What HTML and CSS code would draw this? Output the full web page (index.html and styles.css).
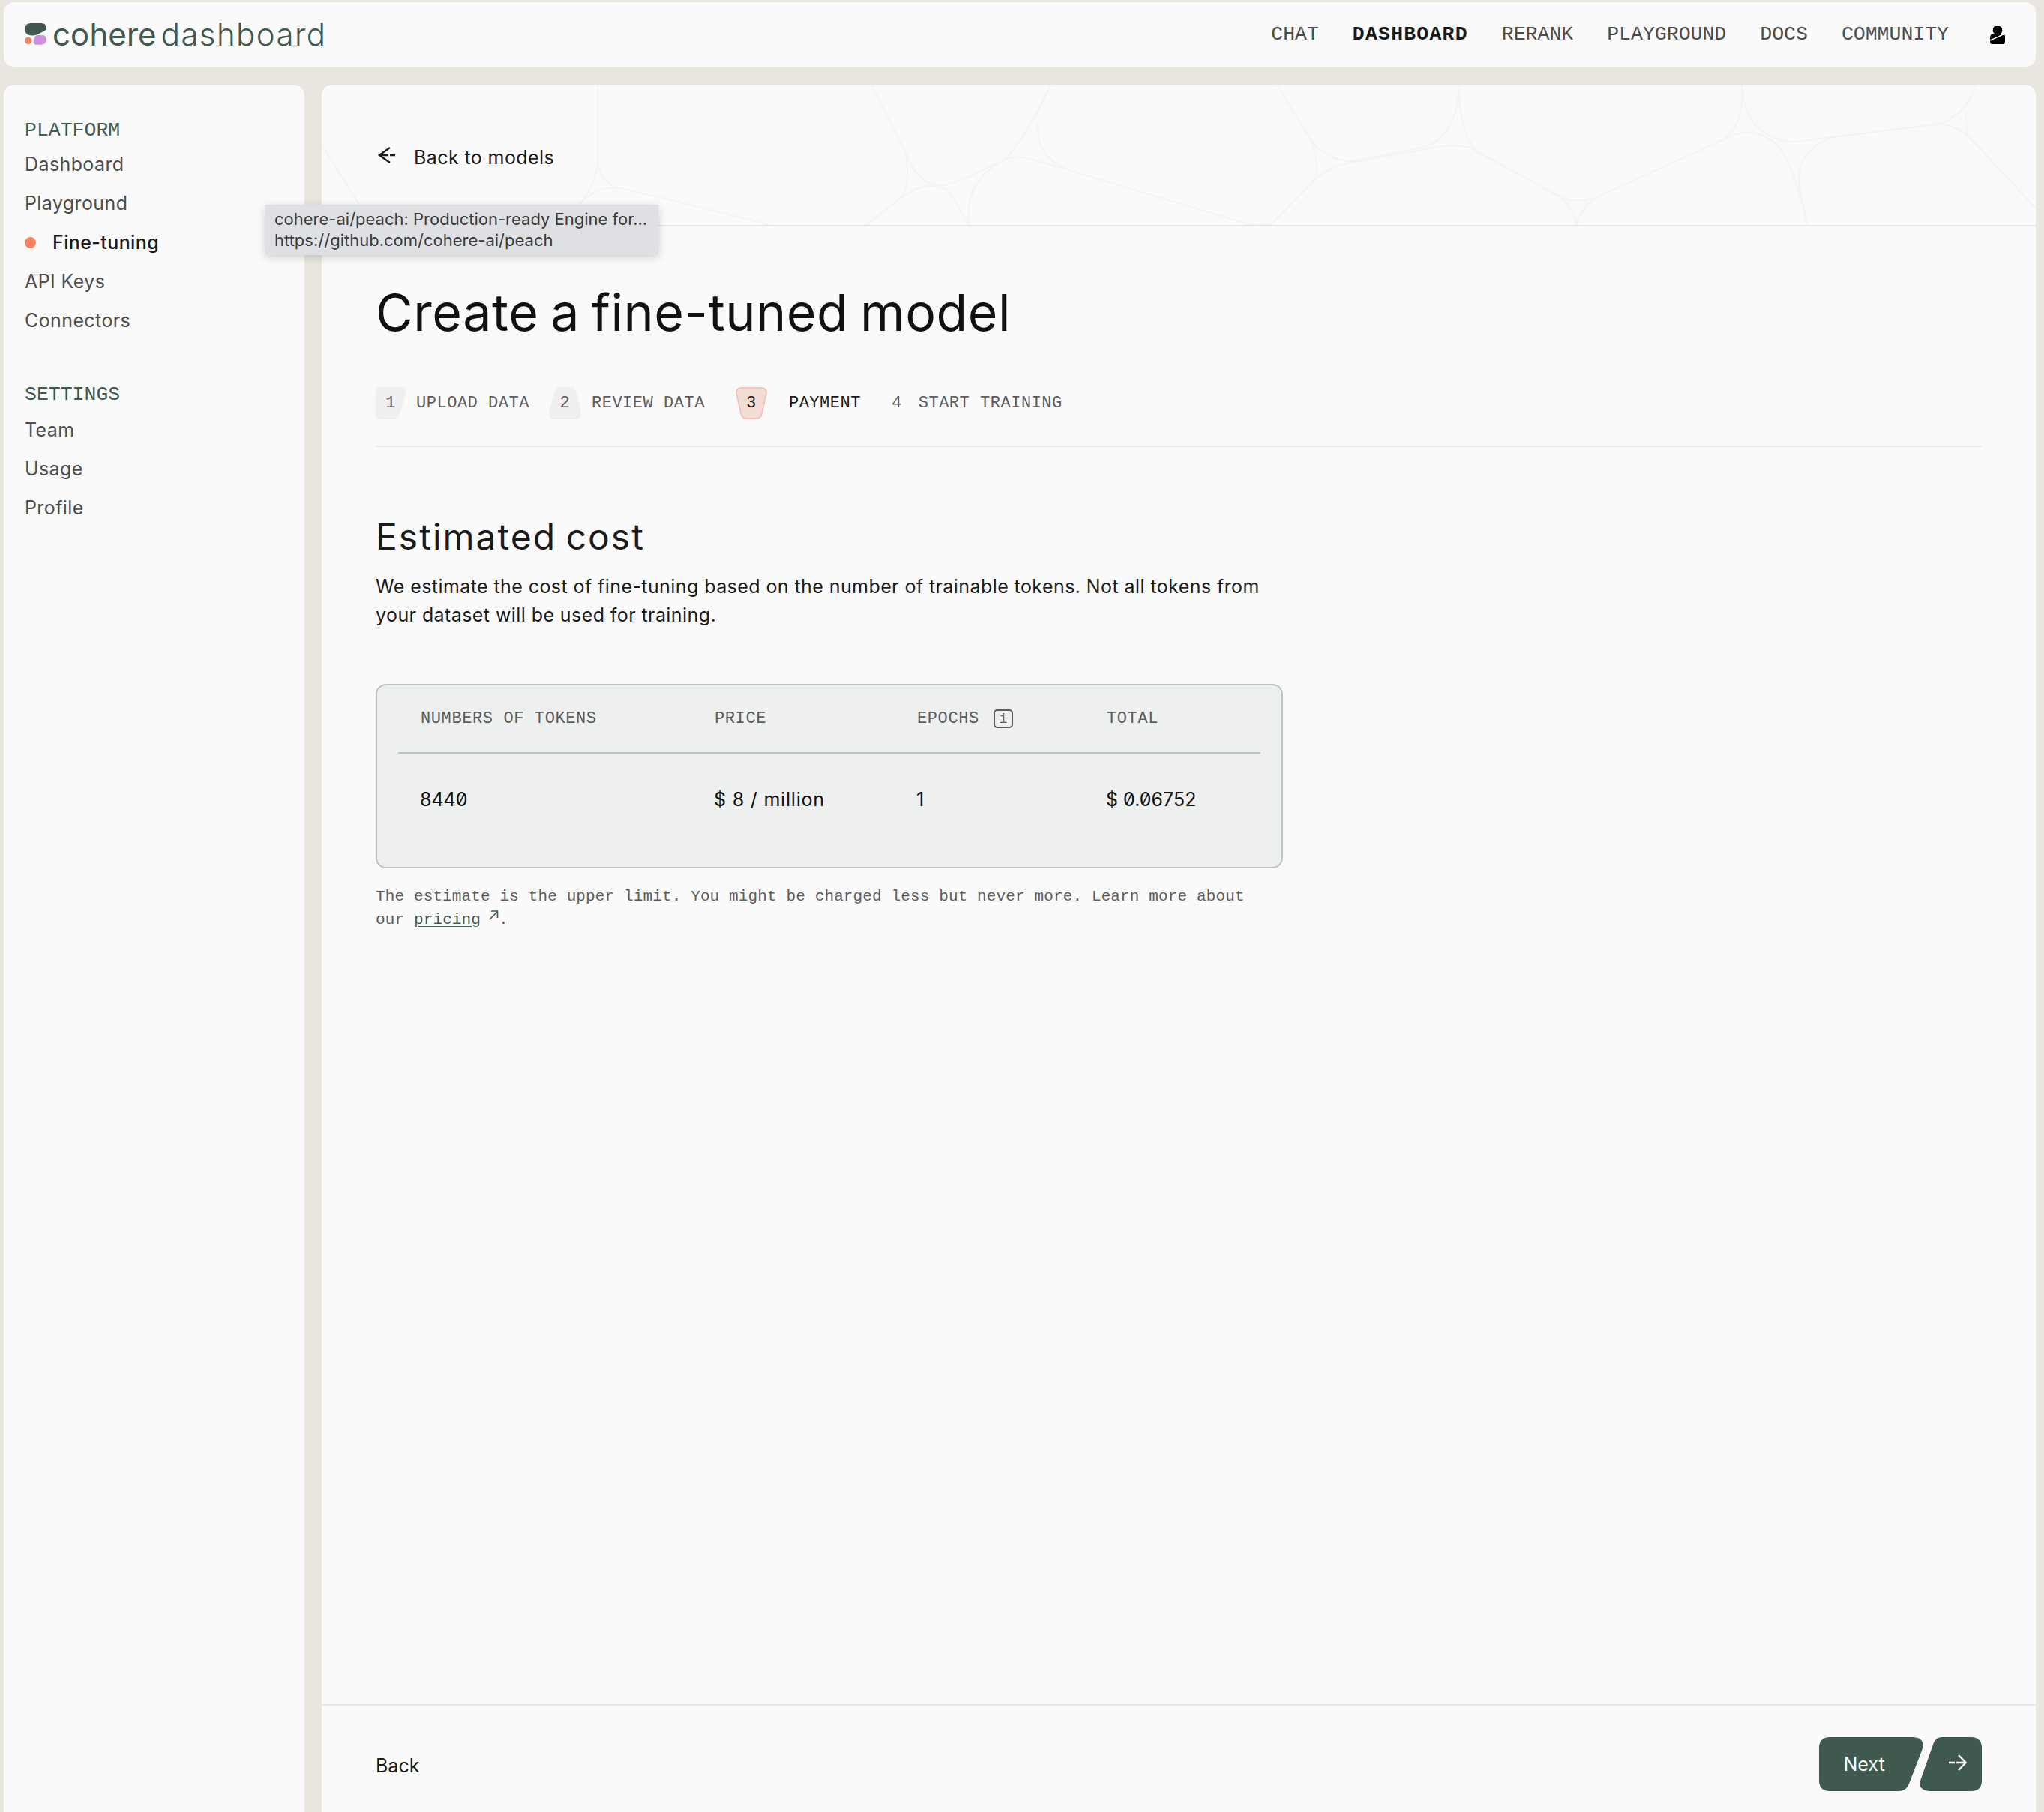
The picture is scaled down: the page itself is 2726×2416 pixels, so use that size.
FILE: index.html
```html
<!DOCTYPE html>
<html lang="en">
<head>
    <meta charset="UTF-8">
    <title>Create a fine-tuned model</title>
    <link rel="stylesheet" href="styles.css">
</head>
<body>
    <header class="topbar">
        <a class="brand">
            <svg class="brand-mark" width="30" height="30" viewBox="0 0 30 30">
                <path fill="#40594f" d="M8 1H22C27 1 29 4 29 7C29 11 25 12 21 14C17 16.500 14 17.500 10 17.500C4 17.500 0 14 0 9C0 4 3 1 8 1Z"/>
                <circle fill="#f4845f" cx="4.700" cy="24.300" r="4.800"/>
                <path fill="#ce8fe0" d="M17 17H24C27 17 29 20 29 23C29 27 26 29.700 22 29.700H15C13 29.700 12 28 12 26C12 21 14 17 17 17Z"/>
            </svg>
            <span class="brand-name">cohere</span>
            <span class="brand-sub">dashboard</span>
        </a>
        <nav class="topnav">
            <a>CHAT</a>
            <a class="active">DASHBOARD</a>
            <a>RERANK</a>
            <a>PLAYGROUND</a>
            <a>DOCS</a>
            <a>COMMUNITY</a>
            <svg class="user-icon" width="20" height="26" viewBox="0 0 20 26">
                <circle cx="10" cy="7.300" r="6.300" fill="#000"/>
                <path fill="#000" d="M4 12H17C19 12 20 14 20 16V23C20 25 19 26 17 26H3C1 26 0 25 0 23V18C0 14 2 12 4 12Z"/>
                <path stroke="#fafafa" stroke-width="1.500" d="M0 21L20 12"/>
            </svg>
        </nav>
    </header>

    <div class="layout">
        <aside class="sidebar">
            <h4 class="side-title">PLATFORM</h4>
            <a class="side-link">Dashboard</a>
            <a class="side-link">Playground</a>
            <a class="side-link current"><span class="dot"></span>Fine-tuning</a>
            <a class="side-link">API Keys</a>
            <a class="side-link">Connectors</a>
            <h4 class="side-title second">SETTINGS</h4>
            <a class="side-link">Team</a>
            <a class="side-link">Usage</a>
            <a class="side-link">Profile</a>
        </aside>

        <main class="main">
            <div class="banner">
                <!-- faint background lines -->
                <svg class="banner-lines" width="2286" height="189" viewBox="0 0 2286 189">
                    <g fill="none" stroke="#f3f3f1" stroke-width="2">
                        <path d="M368 0V100Q370 127 393 137L471 155"/>
                        <path d="M343 160Q363 137 393 137"/>
                        <path d="M368 100Q367 133 343 160"/>
                        <path d="M0 80L50 160L57 189"/>
                    </g>
                    <g transform="translate(471,-13) scale(1.1646,0.3333)" fill="none" stroke="#f3f3f1" stroke-width="2">
                        <path vector-effect="non-scaling-stroke" d="M225 40L265 320Q280 445 305 442Q320 440 380 335Q410 200 430 40"/>
                        <path vector-effect="non-scaling-stroke" d="M415 200Q415 330 450 380L650 590Q665 610 685 590L730 430Q745 370 775 350L870 290Q890 275 910 290L920 310L1015 490Q1035 515 1055 490L1200 260Q1230 200 1255 260Q1280 320 1297 605"/>
                        <path vector-effect="non-scaling-stroke" d="M690 40L730 270Q750 345 775 345L855 290Q895 260 898 40Q898 250 920 310"/>
                        <path vector-effect="non-scaling-stroke" d="M1222 40Q1225 250 1280 268L1450 195Q1480 150 1490 40"/>
                        <path vector-effect="non-scaling-stroke" d="M1222 40Q1225 200 1200 260"/>
                        <path vector-effect="non-scaling-stroke" d="M217 605L260 490Q290 410 315 470L337 605Q330 420 380 335Q395 320 410 340L450 380"/>
                        <path vector-effect="non-scaling-stroke" d="M265 320Q270 470 255 500"/>
                        <path vector-effect="non-scaling-stroke" d="M730 270Q740 380 730 430"/>
                        <path vector-effect="non-scaling-stroke" d="M1015 490Q1030 540 1033 605Q1035 540 1055 490"/>
                        <path vector-effect="non-scaling-stroke" d="M1297 605L1287 430Q1285 300 1325 250L1440 200Q1460 190 1480 240L1560 540"/>
                        <path vector-effect="non-scaling-stroke" d="M1478 150L1480 240"/>
                        <path vector-effect="non-scaling-stroke" d="M0 505L115 605"/>
                    </g>
                </svg>
                <a class="back-link">
                    <svg class="back-arrow" width="24" height="22" viewBox="0 0 24 22" fill="none" stroke="#1a1a1a" stroke-width="2.400">
                        <path d="M17 1L3 11l14 10"/>
                        <path d="M3 11h12M17 11h7"/>
                    </svg>
                    <span>Back to models</span>
                </a>
            </div>

            <div class="content">
                <h1 class="page-title">Create a fine-tuned model</h1>

                <div class="steps">
                    <span class="badge badge-a">1</span><span class="step-label">UPLOAD DATA</span>
                    <span class="badge badge-b">2</span><span class="step-label">REVIEW DATA</span>
                    <span class="badge badge-c">
                        <svg class="badge-shape" width="42" height="43" viewBox="0 0 42 43">
                            <path fill="#f3dcd4" stroke="#f5bcaa" stroke-width="1.500" d="M7 1H35C40 1 41 4 41 8L35 35C34 40 31 42 27 42H15C11 42 8 40 7 35L1 8C1 4 2 1 7 1Z"/>
                        </svg>
                        <span class="badge-num">3</span>
                    </span><span class="step-label on">PAYMENT</span>
                    <span class="step-num">4</span><span class="step-label">START TRAINING</span>
                </div>

                <section class="cost">
                    <h2>Estimated cost</h2>
                    <p class="intro">We estimate the cost of fine-tuning based on the number of trainable tokens. Not all tokens from your dataset will be used for training.</p>

                    <div class="cost-table">
                        <div class="cost-row head">
                            <span>NUMBERS OF TOKENS</span>
                            <span>PRICE</span>
                            <span class="epochs">EPOCHS <i class="info">i</i></span>
                            <span>TOTAL</span>
                        </div>
                        <div class="cost-row body">
                            <span>8440</span>
                            <span class="price">$ 8 / million</span>
                            <span>1</span>
                            <span>$ 0.06752</span>
                        </div>
                    </div>

                    <p class="note">The estimate is the upper limit. You might be charged less but never more. Learn more about our <a class="pricing">pricing</a><svg class="ext" width="14" height="14" viewBox="0 0 14 14" fill="none" stroke="#40594f" stroke-width="1.600"><path d="M2 13L12 3M4 2h8.500v9"/></svg>.</p>
                </section>
            </div>

            <footer class="actions">
                <a class="back">Back</a>
                <div class="next">
                    <button class="next-label">Next</button>
                    <button class="next-arrow">
                        <svg width="24" height="22" viewBox="0 0 24 22" fill="none" stroke="#fafafa" stroke-width="2.400">
                            <path d="M0 11h8M10 11h12"/>
                            <path d="M13 1l9.500 10-9.500 10"/>
                        </svg>
                    </button>
                </div>
            </footer>
        </main>
    </div>

    <!-- browser link preview -->
    <div class="link-tip">
        <div>cohere-ai/peach: Production-ready Engine for...</div>
        <div>https://github.com/cohere-ai/peach</div>
    </div>
</body>
</html>
```

FILE: styles.css
```css
html, body {
    height: 100%;
}
body {
    margin: 0;
    height: 2416px;
    overflow: hidden;
    box-sizing: border-box;
    padding: 3px 11px 0 5px;
    background-color: #e8e6df;
    color: #1a1a1a;
    font-family: Inter, "Open Sans", sans-serif;
    display: flex;
    flex-direction: column;
    gap: 24px;
}
a {
    color: inherit;
    text-decoration: none;
}

/* top bar */
.topbar {
    height: 86px;
    flex: none;
    background-color: #fafafa;
    border-radius: 14px;
    display: flex;
    align-items: center;
    justify-content: space-between;
    padding: 0 41px 0 28px;
}
.brand {
    display: flex;
    align-items: center;
    color: #40594f;
    font-size: 42px;
    font-weight: 300;
    padding-bottom: 2px;
}
.brand-mark {
    margin-right: 7px;
}
.brand-name {
    margin-right: 6px;
    font-weight: 400;
    letter-spacing: 0.100px;
}
.brand-sub {
    letter-spacing: 1.400px;
}
.topnav {
    display: flex;
    align-items: center;
    gap: 45px;
    font-family: "Liberation Mono", monospace;
    font-size: 26.500px;
    color: #4d4d4d;
}
.topnav .active {
    color: #1a1a1a;
    font-weight: 700;
    letter-spacing: 1.200px;
}
.user-icon {
    margin-left: 10px;
}

/* sidebar + main */
.layout {
    flex: 1;
    min-height: 0;
    display: flex;
    gap: 23px;
}
.sidebar {
    width: 401px;
    flex: none;
    box-sizing: border-box;
    background-color: #fafafa;
    border-radius: 14px 14px 0 0;
    padding: 44px 28px;
    display: flex;
    flex-direction: column;
}
.side-title {
    margin: 0 0 2px;
    height: 34px;
    line-height: 34px;
    font-family: "Liberation Mono", monospace;
    font-size: 26.500px;
    font-weight: 400;
    color: #40594f;
}
.side-title.second {
    margin: 56px 0 4px;
}
.side-link {
    height: 52px;
    line-height: 52px;
    font-size: 25px;
    letter-spacing: 0.400px;
    color: #4d4d4d;
    display: flex;
    align-items: center;
}
.side-link.current {
    color: #1a1a1a;
    font-weight: 500;
}
.dot {
    width: 15px;
    height: 15px;
    border-radius: 50%;
    background-color: #f4845f;
    margin-right: 22px;
}

.main {
    flex: 1;
    min-width: 0;
    background-color: #fafafa;
    border-radius: 14px 14px 0 0;
    display: flex;
    flex-direction: column;
}
.banner {
    position: relative;
    overflow: hidden;
    height: 189px;
    flex: none;
    box-sizing: border-box;
    border-bottom: 2px solid #e6e6e6;
    border-radius: 14px 14px 0 0;
    padding: 82px 0 0 74px;
}
.banner-lines {
    position: absolute;
    top: 0;
    left: 0;
}
.back-link {
    position: relative;
    display: flex;
    align-items: center;
    height: 30px;
    gap: 25px;
    font-size: 25px;
    letter-spacing: 0.400px;
}
.back-arrow {
    margin-top: -7px;
}
.content {
    flex: 1;
    min-height: 0;
    padding: 0 72px;
}
.page-title {
    margin: 0;
    padding-top: 66px;
    height: 96px;
    line-height: 96px;
    font-size: 68px;
    font-weight: 400;
    letter-spacing: 0.600px;
    word-spacing: -4px;
    color: #111;
}

/* steps */
.steps {
    display: flex;
    align-items: center;
    margin-top: 52px;
    height: 43px;
    padding-bottom: 35px;
    border-bottom: 2px solid #e9e9e9;
    font-family: "Liberation Mono", monospace;
    font-size: 22px;
    letter-spacing: 0.520px;
    color: #5c5c5c;
}
.badge {
    height: 43px;
    display: flex;
    align-items: center;
    justify-content: center;
    background-color: #efefef;
}
.badge-a {
    width: 40px;
    clip-path: path("M8 0H33C39 0 41 3 40 8L32 36C30 41 28 43 23 43H8C2 43 0 41 0 35V8C0 2 2 0 8 0Z");
    margin-right: 14px;
}
.badge-b {
    width: 43px;
    clip-path: path("M14 0H29C33 0 35 2 36 6L43 33C44 40 40 43 35 43H8C2 43 -1 40 0 33L8 6C9 2 11 0 14 0Z");
    margin: 0 14px 0 26px;
}
.badge-c {
    position: relative;
    width: 42px;
    margin: 0 29px 0 41px;
    background: none;
    color: #1a1a1a;
}
.badge-shape {
    position: absolute;
    top: 0;
    left: 0;
}
.badge-num {
    position: relative;
}
.step-num {
    margin: 0 22px 0 41px;
}
.step-label.on {
    color: #1a1a1a;
}

/* estimated cost */
.cost {
    width: 1210px;
}
.cost h2 {
    margin: 89px 0 0;
    height: 62px;
    line-height: 62px;
    font-size: 48px;
    font-weight: 400;
    letter-spacing: 2px;
    word-spacing: -3px;
    color: #1a1a1a;
}
.intro {
    margin: 16px 0 0;
    font-size: 25px;
    letter-spacing: 0.420px;
    line-height: 38px;
}
.cost-table {
    margin-top: 73px;
    box-sizing: border-box;
    height: 246px;
    padding: 0 28px;
    background-color: #eef0ef;
    border: 2px solid #bcc3c0;
    border-radius: 14px;
}
.cost-row {
    display: grid;
    grid-template-columns: 392px 270px 253px 1fr;
    align-items: center;
    padding-left: 30px;
}
.cost-row.head {
    height: 89px;
    border-bottom: 2px solid #bcc3c0;
    font-family: "Liberation Mono", monospace;
    font-size: 22px;
    letter-spacing: 0.600px;
    color: #5c5c5c;
}
.cost-row.body {
    height: 121px;
    padding-left: 29px;
    font-size: 25px;
    font-feature-settings: "zero";
    color: #111;
}
.price {
    letter-spacing: 0.800px;
}
.epochs {
    display: flex;
    align-items: center;
    gap: 19px;
}
.info {
    width: 26px;
    height: 25px;
    box-sizing: border-box;
    border: 2px solid #5c5c5c;
    border-radius: 5px;
    display: flex;
    align-items: center;
    justify-content: center;
    font-style: normal;
    font-size: 18px;
    letter-spacing: 0;
}
.note {
    margin: 22px 0 0;
    max-width: 1175px;
    font-family: "Liberation Mono", monospace;
    font-size: 21px;
    letter-spacing: 0.130px;
    line-height: 31px;
    color: #5c5c5c;
}
.pricing {
    color: #40594f;
    text-decoration: underline;
}
.ext {
    margin: 0 0 5px 10px;
}

/* bottom actions */
.actions {
    height: 144px;
    flex: none;
    box-sizing: border-box;
    border-top: 2px solid #e6e6e6;
    padding: 42px 72px 0;
    display: flex;
    justify-content: space-between;
    align-items: flex-start;
}
.back {
    margin-top: 23px;
    font-size: 25px;
}
.next {
    display: flex;
    height: 72px;
}
button {
    border: none;
    background-color: #40594f;
    color: #fafafa;
    padding: 0;
    font-family: inherit;
    font-size: 25px;
    height: 72px;
}
.next-label {
    width: 140px;
    clip-path: path("M14 0H124C137 0 141 7 137 18L120 62C117 69 113 72 106 72H14C5 72 0 67 0 58V14C0 5 5 0 14 0Z");
    padding-right: 20px;
    margin-right: -6px;
}
.next-arrow {
    width: 83px;
    clip-path: path("M30 0H69C78 0 83 5 83 14V58C83 67 78 72 69 72H14C4 72 -2 66 1 58L18 10C20 3 24 0 30 0Z");
    padding-left: 18px;
}

/* link preview tooltip */
.link-tip {
    position: absolute;
    top: 273px;
    left: 354px;
    width: 524px;
    height: 67px;
    box-sizing: border-box;
    padding: 5px 12px;
    background-color: #dfe0e4;
    border-radius: 2px;
    box-shadow: 0 3px 12px rgba(0, 0, 0, 0.18);
    font-size: 22px;
    line-height: 28px;
    color: #3a3a3a;
}
```
